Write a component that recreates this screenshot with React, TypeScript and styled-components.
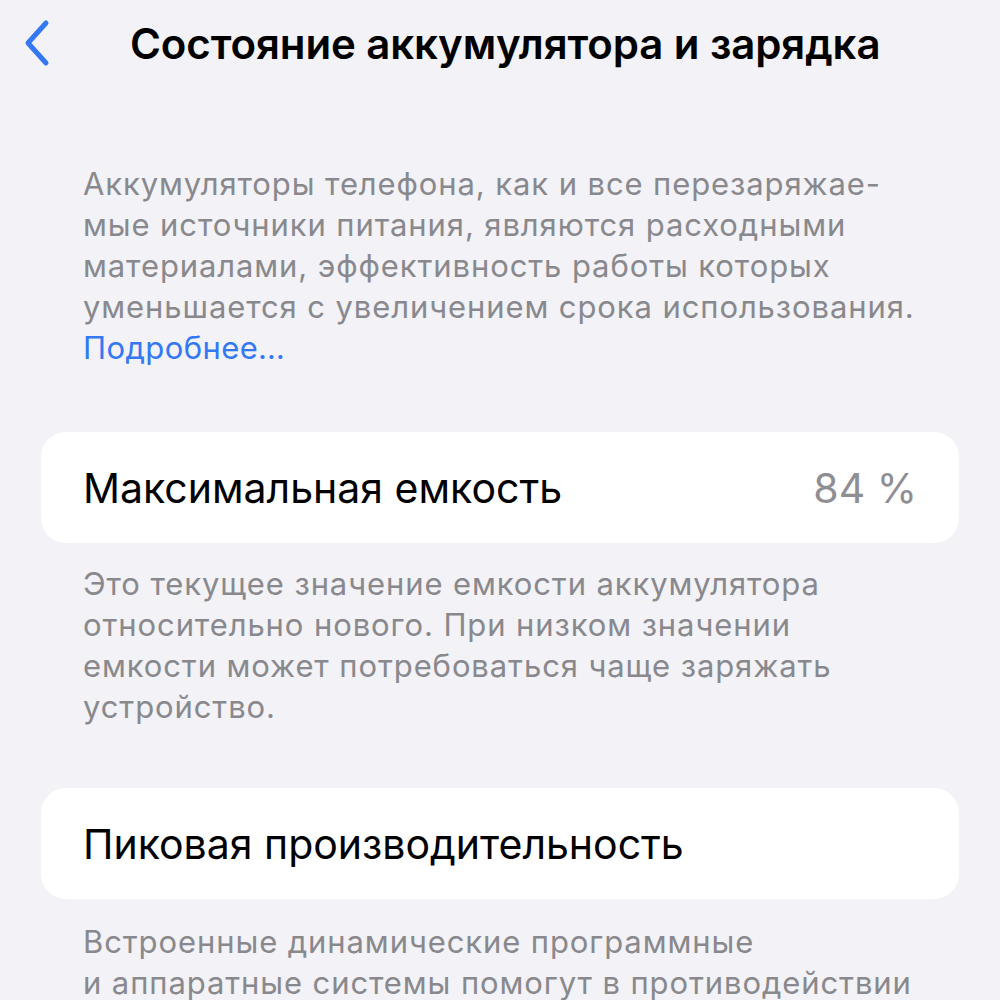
import React from "react";
import styled, { createGlobalStyle } from "styled-components";

const Global = createGlobalStyle`
  html, body {
    margin: 0;
    padding: 0;
    background: #f2f2f7;
  }
  body {
    font-family: Inter, "Noto Sans", "Liberation Sans", sans-serif;
    -webkit-font-smoothing: antialiased;
  }
`;

const Screen = styled.div`
  width: 1000px;
  height: 1000px;
  overflow: hidden;
  background: #f2f2f7;
  display: flex;
  flex-direction: column;
`;

const NavBar = styled.header`
  height: 86px;
  flex-shrink: 0;
  display: flex;
  align-items: center;
  padding-left: 20px;
  gap: 78px;
`;

const BackButton = styled.button`
  border: 0;
  background: none;
  padding: 0;
  width: 32px;
  height: 48px;
  display: flex;
  align-items: center;
  justify-content: center;
  cursor: pointer;
`;

const Title = styled.h1`
  margin: 0;
  font-size: 42px;
  font-weight: 600;
  letter-spacing: -0.1px;
  color: #000;
  white-space: nowrap;
`;

const Content = styled.main`
  display: flex;
  flex-direction: column;
  padding: 77px 41px 0 41px;
`;

const Note = styled.p<{ $top?: number }>`
  margin: ${(p) => p.$top ?? 0}px 0 0;
  padding-left: 42px;
  font-size: 31px;
  line-height: 41px;
  color: #89898d;
  white-space: pre-line;
  letter-spacing: 0.9px;
`;

const Link = styled.a`
  color: #3478f6;
  text-decoration: none;
  letter-spacing: 0.4px;
`;

const Card = styled.section<{ $top: number }>`
  margin-top: ${(p) => p.$top}px;
  height: 111px;
  flex-shrink: 0;
  background: #fff;
  border-radius: 25px;
  display: flex;
  align-items: center;
  justify-content: space-between;
  padding: 0 42px;
`;

const Label = styled.span`
  font-size: 41px;
  color: #000;
  white-space: nowrap;
`;

const Value = styled.span`
  font-size: 41px;
  color: #8e8e93;
  white-space: nowrap;
`;

function Chevron() {
  return (
    <svg width="32" height="48" viewBox="0 0 32 48" fill="none">
      <path
        d="M26 4 L8 24 L26 44"
        stroke="#3478f6"
        strokeWidth="5"
        strokeLinecap="round"
        strokeLinejoin="round"
      />
    </svg>
  );
}

export default function App() {
  return (
    <Screen>
      <Global />
      <NavBar>
        <BackButton aria-label="Назад">
          <Chevron />
        </BackButton>
        <Title>Состояние аккумулятора и зарядка</Title>
      </NavBar>
      <Content>
        <Note>
          {"Аккумуляторы телефона, как и все перезаряжае-\nмые источники питания, являются расходными\nматериалами, эффективность работы которых\nуменьшается с увеличением срока использования.\n"}
          <Link href="#">Подробнее…</Link>
        </Note>
        <Card $top={64}>
          <Label>Максимальная емкость</Label>
          <Value>84 %</Value>
        </Card>
        <Note $top={20}>
          {"Это текущее значение емкости аккумулятора\nотносительно нового. При низком значении\nемкости может потребоваться чаще заряжать\nустройство."}
        </Note>
        <Card $top={61}>
          <Label>Пиковая производительность</Label>
        </Card>
        <Note $top={22}>
          {"Встроенные динамические программные\nи аппаратные системы помогут в противодействии"}
        </Note>
      </Content>
    </Screen>
  );
}
